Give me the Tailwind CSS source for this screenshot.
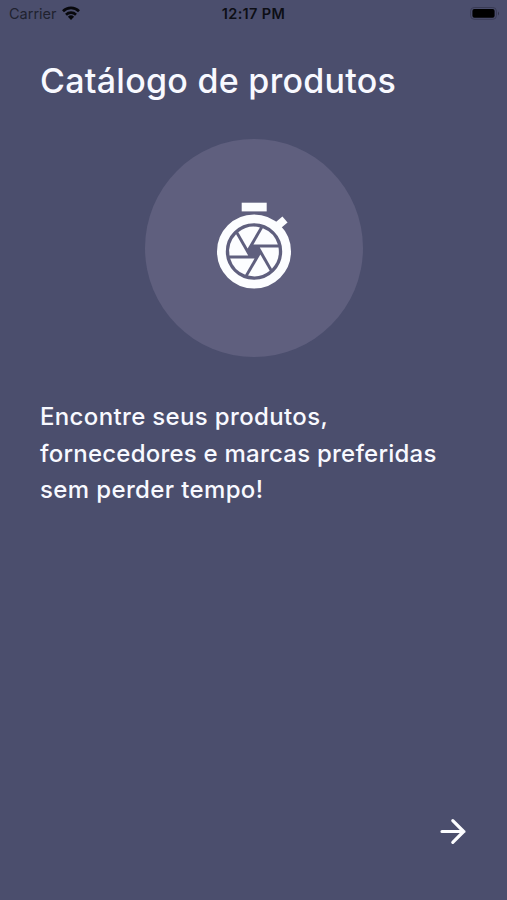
<!DOCTYPE html>
<html lang="pt-BR">
<head>
<meta charset="utf-8">
<title>Catálogo de produtos</title>
<script src="https://cdn.jsdelivr.net/npm/@tailwindcss/browser@4"></script>
</head>
<body class="bg-[#4b4e6d]">
<div class="flex h-[900px] w-[507px] flex-col overflow-hidden bg-[#4b4e6d] font-['Inter',sans-serif] text-[#f8f9ff]">
  <header class="grid h-7 shrink-0 grid-cols-3 items-center pl-[9px] pr-[9px] text-black">
    <div class="flex items-center gap-[6px]">
      <span class="text-[14.5px] leading-7 text-[#20222f]">Carrier</span>
      <svg class="-ml-px -mt-0.5 h-[14px] w-[18px]" viewBox="0 0 18 14" fill="none" stroke="#08080c" stroke-width="2.7"><path d="M1 5.2a11.5 11.5 0 0 1 16 0"/><path d="M4 8.7a7.2 7.2 0 0 1 10 0"/><path d="M9 14l-3.1-3.2a4.5 4.5 0 0 1 6.2 0z" fill="#08080c" stroke="none"/></svg>
    </div>
    <span class="whitespace-nowrap text-center text-[14.5px] font-semibold leading-7 tracking-[0.35px] text-[#0d0e15]">12:17 PM</span>
    <svg class="-mr-[2px] -mt-px h-[13px] w-[30px] justify-self-end" viewBox="0 0 30 13"><rect x=".6" y=".5" width="25.8" height="11.8" rx="3.6" fill="none" stroke="#393b55" stroke-width="1"/><rect x="2.4" y="2" width="22.2" height="8.8" rx="2" fill="#000"/><path d="M28 4.4q2 2 0 4z" fill="#303248"/></svg>
  </header>
  <main class="flex flex-1 flex-col px-10">
    <h1 class="mt-[31px] whitespace-nowrap text-[34px] font-medium leading-[44px] tracking-[0.27px]">Catálogo de produtos</h1>
    <div class="mt-9 flex size-[218px] items-start justify-center self-center rounded-full bg-[#5f5f7e] pl-[1px] pt-[56px]">
      <svg class="h-[100px] w-[95px]" viewBox="0 0 95 100" fill="#fcfdff">
        <rect x="34.7" y="7.7" width="25" height="8.7"/>
        <path d="M69 32l9-7.5" fill="none" stroke="#fcfdff" stroke-width="8"/>
        <circle cx="47" cy="56.5" r="32.6" fill="none" stroke="#fcfdff" stroke-width="8.8"/>
        <g transform="translate(47 56.5)">
          <path d="M5.8-4H24.5A24.8 24.8 0 0 1 17.9 17.2z"/>
          <path d="M5.8-4H24.5A24.8 24.8 0 0 1 17.9 17.2z" transform="rotate(60)"/>
          <path d="M5.8-4H24.5A24.8 24.8 0 0 1 17.9 17.2z" transform="rotate(120)"/>
          <path d="M5.8-4H24.5A24.8 24.8 0 0 1 17.9 17.2z" transform="rotate(180)"/>
          <path d="M5.8-4H24.5A24.8 24.8 0 0 1 17.9 17.2z" transform="rotate(240)"/>
          <path d="M5.8-4H24.5A24.8 24.8 0 0 1 17.9 17.2z" transform="rotate(300)"/>
        </g>
      </svg>
    </div>
    <p class="mt-[42px] whitespace-nowrap text-[24px] font-medium leading-[36.6px]"><span class="tracking-[0.35px]">Encontre seus produtos,</span><br><span class="tracking-[0.23px]">fornecedores e marcas preferidas</span><br><span class="tracking-[0.37px]">sem perder tempo!</span></p>
    <button class="mb-[55px] mt-auto self-end" aria-label="Avançar">
      <svg class="block h-[27px] w-[27px]" viewBox="0 0 27 27" fill="none" stroke="#fcfdff" stroke-width="3.2" stroke-linecap="round" stroke-linejoin="round"><path d="M2 13.5H24M12.8 2.7L23.6 13.5L12.8 24.3"/></svg>
    </button>
  </main>
</div>
</body>
</html>
